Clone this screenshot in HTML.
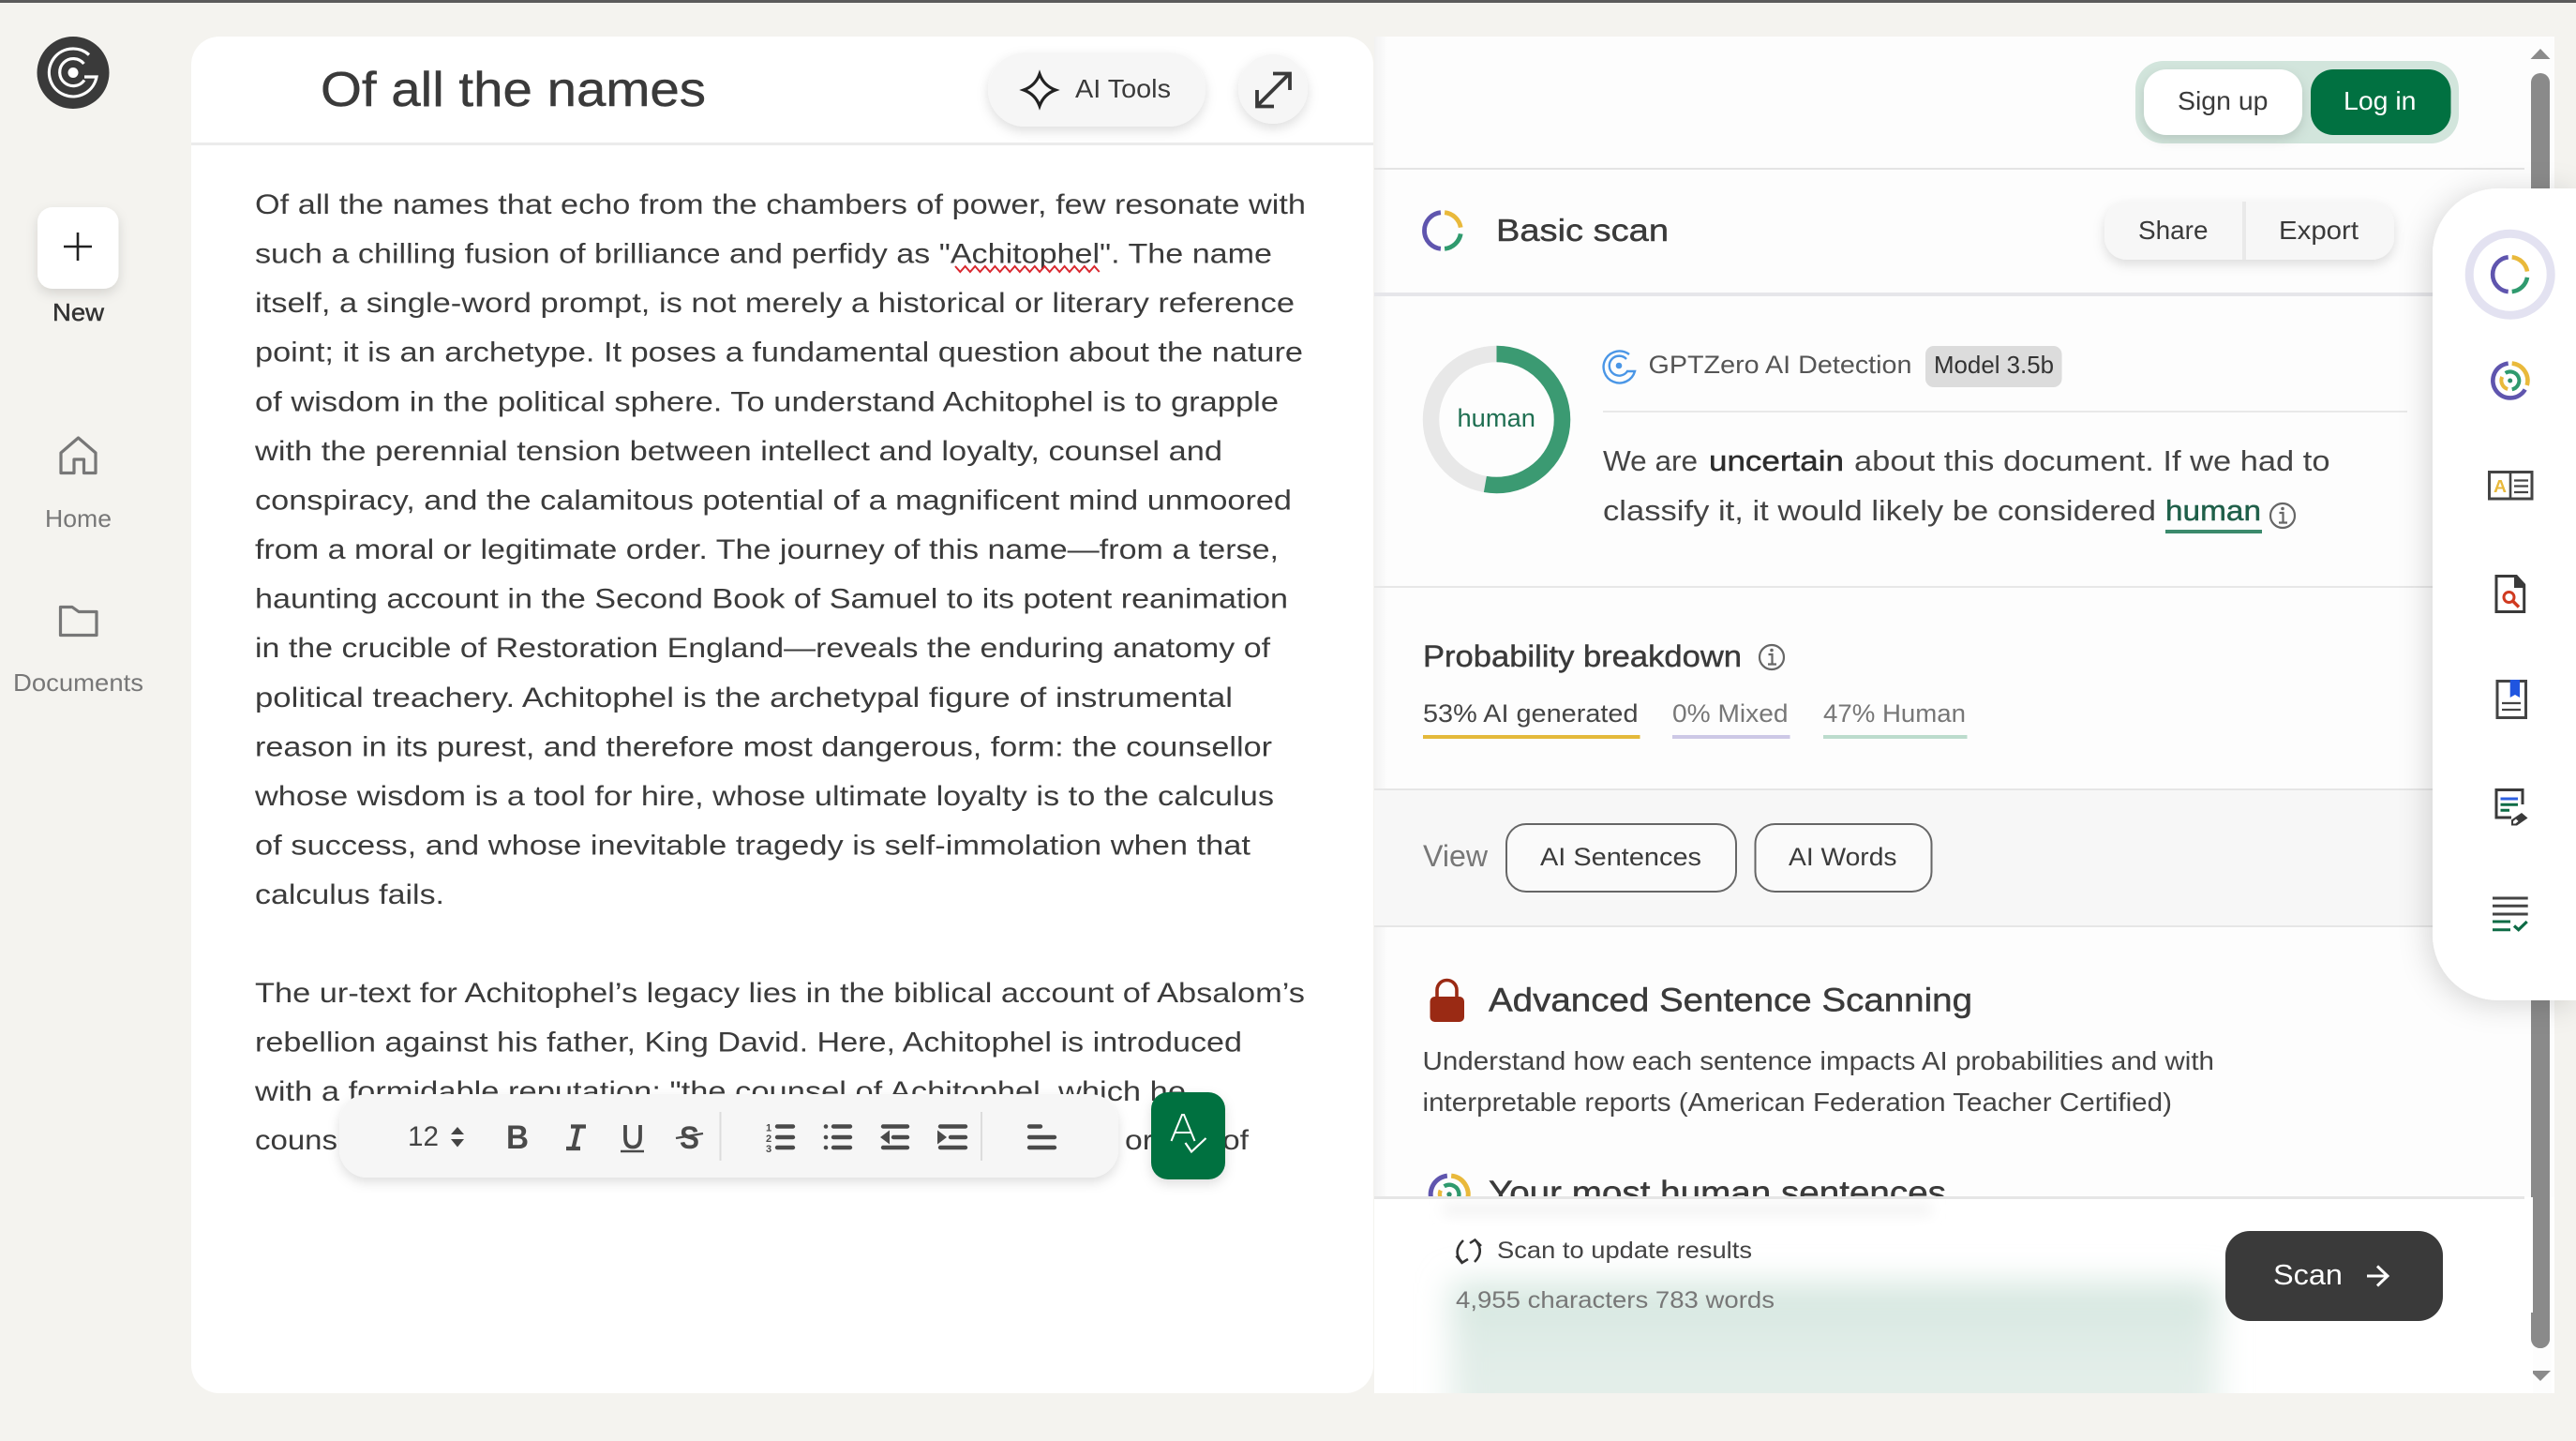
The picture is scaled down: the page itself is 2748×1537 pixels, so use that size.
<!DOCTYPE html>
<html lang="en"><head><meta charset="utf-8"><title>Of all the names</title>
<style>
html,body{margin:0;padding:0;width:2748px;height:1537px;overflow:hidden;background:#f4f3ef}
svg{display:block;font-family:"Liberation Sans",Arial,sans-serif}
.b{font-size:30px;fill:#3b3b3b}
.m{stroke-width:.45px}
</style></head><body>
<svg width="2748" height="1537" viewBox="0 0 2748 1537" xmlns="http://www.w3.org/2000/svg">
<defs>
<filter id="s1" x="-20%" y="-30%" width="140%" height="170%"><feDropShadow dx="0" dy="5" stdDeviation="6" flood-color="#000" flood-opacity=".13"/></filter>
<filter id="s2" x="-30%" y="-10%" width="150%" height="120%"><feDropShadow dx="-4" dy="4" stdDeviation="16" flood-color="#000" flood-opacity=".16"/></filter>
<filter id="bl" x="-15%" y="-60%" width="130%" height="220%"><feGaussianBlur stdDeviation="17"/></filter>
<filter id="bl2" x="-10%" y="-100%" width="120%" height="300%"><feGaussianBlur stdDeviation="7"/></filter>
<linearGradient id="gg" x1="0" y1="0" x2="0" y2="1"><stop offset="0" stop-color="#d3e6de"/><stop offset=".4" stop-color="#e0ece7"/><stop offset="1" stop-color="#e6f0eb"/></linearGradient>
<linearGradient id="ls" x1="0" y1="0" x2="1" y2="0"><stop offset="0" stop-color="#f2f2f2"/><stop offset="1" stop-color="#f2f2f2" stop-opacity="0"/></linearGradient>
<clipPath id="bottom"><rect x="1466" y="1278" width="1260" height="208"/></clipPath>
</defs>

<rect width="2748" height="1537" fill="#f4f3ef"/>
<rect width="2748" height="3" fill="#5b5b5b"/>

<!-- sidebar -->
<circle cx="78" cy="77.5" r="38.5" fill="#3a3a3a"/>
<g fill="none" stroke="#fff" stroke-width="3.200">
<path d="M95 58.5A25.5 25.5 0 1 0 103 82H90"/>
<path d="M89.500 68A14.500 14.500 0 1 0 90 85.500"/>
</g>
<circle cx="78" cy="77.5" r="5.5" fill="#fff"/>

<rect x="40" y="221" width="86.5" height="87" rx="16" fill="#fff" filter="url(#s1)"/>
<path d="M83 248V278M68 263H98" stroke="#222" stroke-width="2.6" fill="none"/>
<text x="56" y="342" font-size="26" fill="#333" textLength="55" lengthAdjust="spacingAndGlyphs" class="m" stroke="#333">New</text>

<path d="M65 504.500V483L83.500 467L102 483V504.500H89.500V490H79V504.500Z" fill="none" stroke="#777" stroke-width="3.200" stroke-linejoin="round"/>
<text x="48" y="562" font-size="26" fill="#777" textLength="71" lengthAdjust="spacingAndGlyphs">Home</text>
<path d="M64.500 677.500V647.500H77L84 652.500H103V677.500Z" fill="none" stroke="#777" stroke-width="3.200" stroke-linejoin="round"/>
<text x="14" y="737" font-size="26" fill="#777" textLength="139" lengthAdjust="spacingAndGlyphs">Documents</text>

<!-- right panel -->
<rect x="1466" y="39" width="1259" height="1447" fill="#fdfdfd"/>
<rect x="1466" y="39" width="14" height="1447" fill="url(#ls)"/>

<!-- left card -->
<rect x="204" y="39" width="1261" height="1447" rx="30" fill="#fff"/>
<rect x="204" y="152" width="1261" height="3" fill="#ebebeb"/>

<text x="342" y="113" font-size="52" fill="#3a3a3a" textLength="411" lengthAdjust="spacingAndGlyphs" class="m" stroke="#3a3a3a">Of all the names</text>

<rect x="1054" y="56" width="232" height="79" rx="39.500" fill="#f6f6f6" filter="url(#s1)"/>
<path d="M1109 79Q1113.500 91.500 1126 96Q1113.500 100.500 1109 113Q1104.500 100.500 1092 96Q1104.500 91.500 1109 79Z" fill="none" stroke="#222" stroke-width="3.200" stroke-linejoin="miter"/>
<text x="1147" y="104" font-size="28" fill="#3a3a3a" textLength="102" lengthAdjust="spacingAndGlyphs">AI Tools</text>
<circle cx="1358" cy="95" r="37" fill="#f6f6f6" filter="url(#s1)"/>
<path d="M1342 112L1375 79M1358 78.500H1376V96M1341 96V113.500H1359" fill="none" stroke="#3a3a3a" stroke-width="3.800"/>

<!-- body text -->
<g class="b">
<text x="272" y="228" textLength="1121" lengthAdjust="spacingAndGlyphs">Of all the names that echo from the chambers of power, few resonate with</text>
<text x="272" y="280.600" textLength="1085" lengthAdjust="spacingAndGlyphs">such a chilling fusion of brilliance and perfidy as "Achitophel". The name</text>
<text x="272" y="333.200" textLength="1109" lengthAdjust="spacingAndGlyphs">itself, a single-word prompt, is not merely a historical or literary reference</text>
<text x="272" y="385.700" textLength="1118" lengthAdjust="spacingAndGlyphs">point; it is an archetype. It poses a fundamental question about the nature</text>
<text x="272" y="438.300" textLength="1092" lengthAdjust="spacingAndGlyphs">of wisdom in the political sphere. To understand Achitophel is to grapple</text>
<text x="272" y="490.900" textLength="1032" lengthAdjust="spacingAndGlyphs">with the perennial tension between intellect and loyalty, counsel and</text>
<text x="272" y="543.500" textLength="1106" lengthAdjust="spacingAndGlyphs">conspiracy, and the calamitous potential of a magnificent mind unmoored</text>
<text x="272" y="596.100" textLength="1092" lengthAdjust="spacingAndGlyphs">from a moral or legitimate order. The journey of this name—from a terse,</text>
<text x="272" y="648.600" textLength="1102" lengthAdjust="spacingAndGlyphs">haunting account in the Second Book of Samuel to its potent reanimation</text>
<text x="272" y="701.200" textLength="1083" lengthAdjust="spacingAndGlyphs">in the crucible of Restoration England—reveals the enduring anatomy of</text>
<text x="272" y="753.800" textLength="1043" lengthAdjust="spacingAndGlyphs">political treachery. Achitophel is the archetypal figure of instrumental</text>
<text x="272" y="806.400" textLength="1085" lengthAdjust="spacingAndGlyphs">reason in its purest, and therefore most dangerous, form: the counsellor</text>
<text x="272" y="859" textLength="1087" lengthAdjust="spacingAndGlyphs">whose wisdom is a tool for hire, whose ultimate loyalty is to the calculus</text>
<text x="272" y="911.500" textLength="1062" lengthAdjust="spacingAndGlyphs">of success, and whose inevitable tragedy is self-immolation when that</text>
<text x="272" y="964.100" textLength="202" lengthAdjust="spacingAndGlyphs">calculus fails.</text>
<text x="272" y="1068.800" textLength="1120" lengthAdjust="spacingAndGlyphs">The ur-text for Achitophel’s legacy lies in the biblical account of Absalom’s</text>
<text x="272" y="1121.400" textLength="1053" lengthAdjust="spacingAndGlyphs">rebellion against his father, King David. Here, Achitophel is introduced</text>
<text x="272" y="1174" textLength="993" lengthAdjust="spacingAndGlyphs">with a formidable reputation: "the counsel of Achitophel, which he</text>
<text x="272" y="1226" textLength="88" lengthAdjust="spacingAndGlyphs">couns</text>
<text x="1200" y="1226" textLength="30" lengthAdjust="spacingAndGlyphs">or</text>
<text x="1304" y="1226" textLength="28" lengthAdjust="spacingAndGlyphs">of</text>
</g>
<path d="M1019 284l5.300 6 5.300-6 5.300 6 5.300-6 5.300 6 5.300-6 5.300 6 5.300-6 5.300 6 5.300-6 5.300 6 5.300-6 5.300 6 5.300-6 5.300 6 5.300-6 5.300 6 5.300-6 5.300 6 5.300-6 5.300 6 5.300-6 5.300 6 5.300-6 5.300 6 5.300-6 5.300 6 5.300-6 5.300 6" fill="none" stroke="#d9282f" stroke-width="2"/>

<!-- toolbar -->
<rect x="362" y="1167" width="831" height="89" rx="30" fill="#f6f6f6" filter="url(#s1)"/>
<text x="435" y="1222" font-size="30" fill="#444" textLength="33" lengthAdjust="spacingAndGlyphs">12</text>
<path d="M488 1202L495 1210H481ZM481 1215H495L488 1223.500Z" fill="#444"/>
<text x="540" y="1225" font-size="35" font-weight="700" fill="#4a4a4a" textLength="24" lengthAdjust="spacingAndGlyphs">B</text>
<path d="M609 1201.500H625M604 1225H619M617 1201.500L611.500 1225" fill="none" stroke="#4a4a4a" stroke-width="4.200"/>
<path d="M667 1200V1213Q667 1223.500 675 1223.500Q683 1223.500 683 1213V1200" fill="none" stroke="#4a4a4a" stroke-width="3.800"/>
<path d="M662 1228H687" stroke="#4a4a4a" stroke-width="2.600"/>
<text x="725" y="1225" font-size="34" font-weight="700" fill="#4a4a4a" textLength="21" lengthAdjust="spacingAndGlyphs">S</text>
<path d="M721 1214L750 1209" stroke="#4a4a4a" stroke-width="2.400"/>
<rect x="767.500" y="1186" width="2" height="52" fill="#dcdcdc"/>
<g stroke="#4a4a4a" stroke-width="4.400" stroke-linecap="round" fill="none">
<path d="M829 1201.500H846M829 1213H846M829 1224H846"/>
<path d="M889 1201.500H907M889 1213H907M889 1224H907"/>
<path d="M942 1201.500H968M953 1213H968M942 1224H968"/>
<path d="M1003 1201.500H1030M1014 1213H1030M1003 1224H1030"/>
<path d="M1098 1201.500H1110M1098 1213H1125M1098 1224H1125"/>
</g>
<text x="817" y="1206.500" font-size="11" font-weight="700" fill="#4a4a4a">1</text>
<text x="817" y="1218" font-size="11" font-weight="700" fill="#4a4a4a">2</text>
<text x="817" y="1229" font-size="11" font-weight="700" fill="#4a4a4a">3</text>
<circle cx="881" cy="1201.500" r="2.300" fill="#4a4a4a"/><circle cx="881" cy="1213" r="2.300" fill="#4a4a4a"/><circle cx="881" cy="1224" r="2.300" fill="#4a4a4a"/>
<path d="M949 1205.500V1220.500L939 1213ZM1000 1205.500V1220.500L1010 1213Z" fill="#4a4a4a"/>
<rect x="1046" y="1186" width="2" height="52" fill="#dcdcdc"/>

<!-- green A button -->
<rect x="1228" y="1165" width="79" height="93" rx="18" fill="#017141" filter="url(#s1)"/>
<path d="M1249.500 1217L1261 1189H1263L1274.500 1217M1253.500 1208H1270.500" fill="none" stroke="#fff" stroke-width="2"/>
<path d="M1264.500 1219L1271 1228.500L1286.500 1214" fill="none" stroke="#fff" stroke-width="2.200"/>

<!-- scrollbar -->
<path d="M2710 52L2720.500 63H2699.500Z" fill="#8b8b8b"/>
<rect x="2700" y="78" width="20" height="1360" rx="10" fill="#8a8a8a"/>
<path d="M2699 1462H2721L2710 1473Z" fill="#8b8b8b"/>

<!-- auth -->
<rect x="2278" y="65" width="345" height="88" rx="30" fill="#d2e5dc"/>
<rect x="2287" y="74" width="169" height="70" rx="24" fill="#fff" filter="url(#s1)"/>
<text x="2323" y="117" font-size="28" fill="#3a3a3a" textLength="96.500" lengthAdjust="spacingAndGlyphs">Sign up</text>
<rect x="2465" y="74" width="149.500" height="70" rx="24" fill="#017141"/>
<text x="2500" y="117" font-size="28" fill="#fff" textLength="77.500" lengthAdjust="spacingAndGlyphs">Log in</text>
<rect x="1466" y="179" width="1227" height="2" fill="#e4e4e4"/>

<!-- Basic scan row -->
<g transform="translate(1539,246) scale(1.05)" fill="none" stroke-width="4.600">
<path d="M-2-18.400A18.500 18.500 0 0 0-2 18.400" stroke="#5f55ae"/>
<path d="M2-18.400A18.500 18.500 0 0 1 18.300-3.200" stroke="#e9b93b"/>
<path d="M18.300 3.200A18.500 18.500 0 0 1 2 18.400" stroke="#2f9a6e"/>
</g>
<text x="1596" y="257" font-size="33" fill="#3a3a3a" textLength="184" lengthAdjust="spacingAndGlyphs" class="m" stroke="#3a3a3a">Basic scan</text>
<rect x="2245" y="215" width="309" height="62" rx="24" fill="#f7f7f7" filter="url(#s1)"/>
<rect x="2392" y="215" width="4" height="62" fill="#e9e9e9"/>
<text x="2281" y="255" font-size="28" fill="#3a3a3a" textLength="74.500" lengthAdjust="spacingAndGlyphs">Share</text>
<text x="2431" y="255" font-size="28" fill="#3a3a3a" textLength="85" lengthAdjust="spacingAndGlyphs">Export</text>
<rect x="1466" y="312" width="1130" height="4" fill="#e6e6ea"/>

<!-- donut -->
<circle cx="1596.500" cy="447.500" r="70" fill="none" stroke="#e8e8e8" stroke-width="17.500"/>
<circle cx="1596.500" cy="447.500" r="70" fill="none" stroke="#3b9a72" stroke-width="17.500" stroke-dasharray="232 440" transform="rotate(-90 1596.500 447.500)"/>
<text x="1554.500" y="455" font-size="27" fill="#1f6f52" textLength="83.500" lengthAdjust="spacingAndGlyphs">human</text>

<g fill="none" stroke="#4a96e6" stroke-width="2.400">
<path d="M1738 378A17 17 0 1 0 1744 396H1735"/>
<path d="M1735 383A10.500 10.500 0 1 0 1736 396"/>
</g>
<circle cx="1727" cy="390" r="3.300" fill="#4a96e6"/>
<text x="1758.500" y="398" font-size="27" fill="#555" textLength="281" lengthAdjust="spacingAndGlyphs">GPTZero AI Detection</text>
<rect x="2054" y="369" width="145.500" height="44" rx="9" fill="#dcdcdc"/>
<text x="2063" y="398" font-size="26" fill="#333" textLength="128" lengthAdjust="spacingAndGlyphs">Model 3.5b</text>
<rect x="1710" y="438" width="858" height="2" fill="#e9e9e9"/>

<text x="1710" y="502" font-size="31" fill="#444" textLength="101" lengthAdjust="spacingAndGlyphs">We are</text>
<text x="1823" y="502" font-size="31" fill="#2c2c2c" textLength="144" lengthAdjust="spacingAndGlyphs" class="m" stroke="#2c2c2c">uncertain</text>
<text x="1978" y="502" font-size="31" fill="#444" textLength="507.500" lengthAdjust="spacingAndGlyphs">about this document. If we had to</text>
<text x="1710" y="555" font-size="31" fill="#444" textLength="590" lengthAdjust="spacingAndGlyphs">classify it, it would likely be considered</text>
<text x="2310" y="555" font-size="31" fill="#1f5f49" textLength="102" lengthAdjust="spacingAndGlyphs" class="m" stroke="#1f5f49">human</text>
<rect x="2310" y="565" width="103" height="4" fill="#3b8a6c"/>
<g fill="none" stroke="#666" stroke-width="2.200"><circle cx="2435" cy="550" r="13"/><path d="M2431.500 547H2435.500V557M2431 557.500H2440"/></g><circle cx="2435" cy="542.500" r="1.800" fill="#666"/>
<rect x="1466" y="625" width="1130" height="2" fill="#e7e7e7"/>

<!-- Probability -->
<text x="1518" y="711" font-size="32" fill="#3a3a3a" textLength="340" lengthAdjust="spacingAndGlyphs" class="m" stroke="#3a3a3a">Probability breakdown</text>
<g fill="none" stroke="#666" stroke-width="2.200"><circle cx="1890" cy="701" r="13"/><path d="M1886.500 698H1890.500V708M1886 708.500H1895"/></g><circle cx="1890" cy="693.500" r="1.800" fill="#666"/>
<text x="1518" y="770" font-size="27" fill="#444" textLength="229.500" lengthAdjust="spacingAndGlyphs">53% AI generated</text>
<rect x="1518" y="784" width="231.500" height="4" fill="#e4b93a"/>
<text x="1784" y="770" font-size="27" fill="#777" textLength="123.500" lengthAdjust="spacingAndGlyphs">0% Mixed</text>
<rect x="1784" y="784" width="125.500" height="4" fill="#cdc8e6"/>
<text x="1945" y="770" font-size="27" fill="#777" textLength="152" lengthAdjust="spacingAndGlyphs">47% Human</text>
<rect x="1945" y="784" width="153.500" height="4" fill="#bcdccd"/>

<!-- View -->
<rect x="1466" y="842" width="1130" height="147" fill="#f7f7f7"/>
<rect x="1466" y="841" width="1130" height="2" fill="#e6e6e6"/>
<rect x="1466" y="987" width="1130" height="2" fill="#e6e6e6"/>
<text x="1518" y="924" font-size="32" fill="#777" textLength="69" lengthAdjust="spacingAndGlyphs">View</text>
<rect x="1607" y="879" width="245" height="72" rx="21" fill="#fafafa" stroke="#666" stroke-width="2"/>
<text x="1643" y="923" font-size="27" fill="#3a3a3a" textLength="172" lengthAdjust="spacingAndGlyphs">AI Sentences</text>
<rect x="1872.500" y="879" width="188" height="72" rx="21" fill="#fafafa" stroke="#666" stroke-width="2"/>
<text x="1908" y="923" font-size="27" fill="#3a3a3a" textLength="115.500" lengthAdjust="spacingAndGlyphs">AI Words</text>

<!-- Lock -->
<path d="M1533 1064V1056A10.500 10.500 0 0 1 1554 1056V1064" fill="none" stroke="#9a2a14" stroke-width="3.600"/>
<rect x="1525.500" y="1063" width="36.500" height="27" rx="5" fill="#9a2a14"/>
<text x="1588" y="1078.500" font-size="35" fill="#3a3a3a" textLength="516" lengthAdjust="spacingAndGlyphs" class="m" stroke="#3a3a3a">Advanced Sentence Scanning</text>
<text x="1517.500" y="1141" font-size="28" fill="#444" textLength="844.500" lengthAdjust="spacingAndGlyphs">Understand how each sentence impacts AI probabilities and with</text>
<text x="1517.500" y="1185" font-size="28" fill="#444" textLength="799.500" lengthAdjust="spacingAndGlyphs">interpretable reports (American Federation Teacher Certified)</text>

<!-- most human -->
<g transform="translate(1546,1274) scale(1.08)" fill="none">
<g stroke-width="4.600"><path d="M-2-18.400A18.500 18.500 0 1 0 16 9.500" stroke="#5f55ae"/>
<path d="M2-18.400A18.500 18.500 0 0 1 18 5" stroke="#e9b93b"/></g>
<g stroke-width="4"><path d="M-5-8A9.500 9.500 0 1 1 2 9.300" stroke="#2f9a6e"/>
<path d="M-2.500 9A9.500 9.500 0 0 1-8.500-4" stroke="#e9b93b"/></g>
<circle r="2.500" fill="#2f8f6b"/>
</g>
<text x="1588" y="1284" font-size="35" fill="#3a3a3a" textLength="488" lengthAdjust="spacingAndGlyphs" class="m" stroke="#3a3a3a">Your most human sentences</text>

<!-- bottom -->
<rect x="1466" y="1277" width="1236" height="209" fill="#fff"/>
<rect x="2722" y="1277" width="3" height="209" fill="#fff"/>
<g clip-path="url(#bottom)">
<rect x="1540" y="1284" width="520" height="12" fill="#f2f2f2" filter="url(#bl2)"/>
<rect x="1548" y="1368" width="818" height="160" fill="url(#gg)" filter="url(#bl)"/>
</g>
<rect x="1466" y="1276" width="1227" height="3" fill="#e6e6e6"/>
<path d="M2700 1400H2720V1428A10 10 0 0 1 2700 1428Z" fill="#8a8a8a"/>

<path d="M1561 1323Q1549 1335 1559.500 1346M1553.500 1339.500L1559.500 1347L1566 1343" fill="none" stroke="#333" stroke-width="2.500"/>
<path d="M1573 1346Q1584 1335 1574 1323M1580 1329L1573.500 1322.500L1568 1326" fill="none" stroke="#333" stroke-width="2.500"/>
<text x="1597" y="1342" font-size="25" fill="#444" textLength="272" lengthAdjust="spacingAndGlyphs">Scan to update results</text>
<text x="1553" y="1395" font-size="25" fill="#777" textLength="340" lengthAdjust="spacingAndGlyphs">4,955 characters 783 words</text>
<rect x="2374" y="1313" width="232" height="96" rx="26" fill="#3a3a3a"/>
<text x="2425" y="1370" font-size="31" fill="#fff" textLength="74" lengthAdjust="spacingAndGlyphs">Scan</text>
<path d="M2525 1361H2547M2536 1350.500L2547 1361L2536 1371.500" fill="none" stroke="#fff" stroke-width="3"/>

<!-- floating tool panel -->
<path d="M2748 201H2665A70 70 0 0 0 2595 271V997A70 70 0 0 0 2665 1067H2748Z" fill="#fff" filter="url(#s2)"/>
<circle cx="2677.700" cy="292.700" r="43.500" fill="none" stroke="#e3e2f1" stroke-width="9"/>
<g transform="translate(2677.700,292.700)" fill="none" stroke-width="4.600">
<path d="M-2-18.400A18.500 18.500 0 0 0-2 18.400" stroke="#5f55ae"/>
<path d="M2-18.400A18.500 18.500 0 0 1 18.300-3.200" stroke="#e9b93b"/>
<path d="M18.300 3.200A18.500 18.500 0 0 1 2 18.400" stroke="#2f9a6e"/>
</g>
<g transform="translate(2677.700,406)" fill="none">
<g stroke-width="4.600"><path d="M-2-18.400A18.500 18.500 0 1 0 16 9.500" stroke="#5f55ae"/>
<path d="M2-18.400A18.500 18.500 0 0 1 18 5" stroke="#e9b93b"/></g>
<g stroke-width="4"><path d="M-5-8A9.500 9.500 0 1 1 2 9.300" stroke="#2f9a6e"/>
<path d="M-2.500 9A9.500 9.500 0 0 1-8.500-4" stroke="#e9b93b"/></g>
<circle r="2.500" fill="#2f8f6b"/>
</g>
<rect x="2655.500" y="503.500" width="45.500" height="28.500" fill="none" stroke="#444" stroke-width="3"/>
<path d="M2678 503V532" stroke="#444" stroke-width="2.600"/>
<text x="2660" y="525" font-size="18" font-weight="700" fill="#e9b93b" textLength="14" lengthAdjust="spacingAndGlyphs">A</text>
<path d="M2682 512.500H2697M2682 518.500H2697M2682 525H2697" stroke="#444" stroke-width="2.200"/>

<path d="M2663 614.500H2684L2692.700 624V652.500H2663Z" fill="none" stroke="#3a3a3a" stroke-width="3"/>
<path d="M2682 613H2685L2694 623V627H2682Z" fill="#3a3a3a"/>
<circle cx="2676.500" cy="637" r="5.500" fill="none" stroke="#d03a20" stroke-width="3"/>
<path d="M2680.500 641L2687 647.500" stroke="#d03a20" stroke-width="3.400"/>

<rect x="2664" y="726.500" width="30.500" height="39" fill="none" stroke="#444" stroke-width="3"/>
<path d="M2677.700 725H2688V744L2683 741L2677.700 744Z" fill="#1f55e0"/>
<path d="M2669 750H2689M2669 757H2689" stroke="#444" stroke-width="2.200"/>

<path d="M2691 858V842.500H2663V872H2679" fill="none" stroke="#3a3a3a" stroke-width="3"/>
<path d="M2667.500 852H2686" stroke="#2c5fe0" stroke-width="3"/>
<path d="M2667.500 858.300H2686M2667.500 864.300H2677" stroke="#0d6b45" stroke-width="3"/>
<path d="M2690 867L2696.500 872.500L2685 880.500H2679V874.500Z" fill="#3a3a3a"/>
<path d="M2684 873.500L2681 876V878.500H2683.500L2686.500 876Z" fill="#fff"/>

<path d="M2659 958H2696.700M2659 966.300H2696.700M2659 975H2696.700" stroke="#444" stroke-width="3"/>
<path d="M2659 983H2678M2659 991.700H2678" stroke="#0d6b45" stroke-width="3"/>
<path d="M2682 987.500L2686.700 991.700L2695.700 983" fill="none" stroke="#0d6b45" stroke-width="3.200"/>
</svg>
</body></html>
